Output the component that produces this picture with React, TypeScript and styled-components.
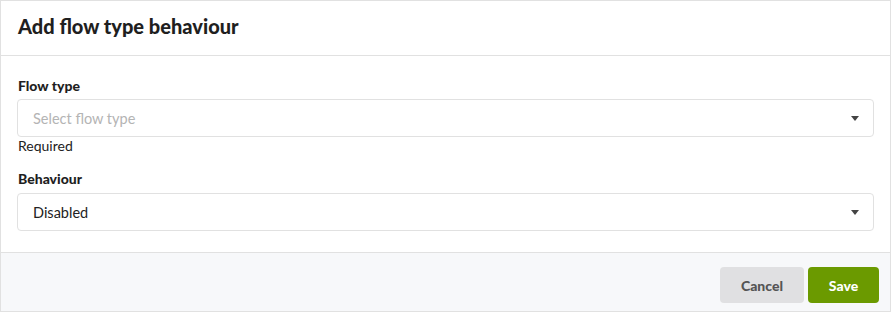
import styled, { createGlobalStyle } from 'styled-components';

const GlobalStyle = createGlobalStyle`
  html, body {
    margin: 0;
    padding: 0;
    background: #ffffff;
    font-family: Lato, 'Open Sans', Arial, sans-serif;
  }
`;

const Modal = styled.div`
  box-sizing: border-box;
  width: 891px;
  height: 312px;
  border: 1px solid #e1e1e1;
  display: flex;
  flex-direction: column;
  background: #fff;
  color: #222;
`;

const Header = styled.div`
  height: 54px;
  padding: 0 17px;
  display: flex;
  align-items: center;
  border-bottom: 1px solid #e1e1e1;
`;

const Title = styled.h2`
  margin: 0;
  font-size: 20px;
  font-weight: 900;
  color: #1f1f1f;
  padding-bottom: 4px;
`;

const Body = styled.div`
  flex: 1;
  padding: 21px 16px 0;
  display: flex;
  flex-direction: column;
`;

const Field = styled.div<{ $gap?: number }>`
  display: flex;
  flex-direction: column;
  margin-bottom: ${(p) => p.$gap ?? 0}px;
`;

const Label = styled.label`
  font-size: 14px;
  font-weight: 900;
  color: #1f1f1f;
  line-height: 18px;
  margin-bottom: 4px;
  padding-left: 1px;
`;

const SelectBox = styled.div<{ $offset?: number }>`
  box-sizing: border-box;
  height: 38px;
  margin-top: ${(p) => p.$offset ?? 0}px;
  border: 1px solid #e1e1e1;
  border-radius: 4px;
  padding: 0 14px 0 15px;
  display: flex;
  align-items: center;
  justify-content: space-between;
`;

const SelectValue = styled.span<{ $placeholder?: boolean }>`
  font-size: 14.5px;
  color: ${(p) => (p.$placeholder ? '#b4b4b4' : '#222')};
`;

const Caret = styled.span`
  width: 0;
  height: 0;
  border-left: 4px solid transparent;
  border-right: 4px solid transparent;
  border-top: 5px solid #444;
`;

const Hint = styled.div`
  font-size: 14px;
  color: #222;
  line-height: 18px;
  padding-left: 1px;
`;

const Footer = styled.div`
  height: 59px;
  box-sizing: border-box;
  border-top: 1px solid #e1e1e1;
  background: #f7f8fa;
  display: flex;
  justify-content: flex-end;
  align-items: flex-start;
  gap: 4px;
  padding: 14px 11px 0;
`;

const Button = styled.button<{ $primary?: boolean }>`
  height: 36px;
  border: none;
  border-radius: 4px;
  font-family: inherit;
  font-size: 14px;
  font-weight: 900;
  cursor: pointer;
  padding: 0;
  width: ${(p) => (p.$primary ? '71px' : '84px')};
  background: ${(p) => (p.$primary ? '#6b9a00' : '#e0e0e2')};
  color: ${(p) => (p.$primary ? '#fff' : '#555')};
`;

export default function App() {
  return (
    <>
      <GlobalStyle />
      <Modal>
        <Header>
          <Title>Add flow type behaviour</Title>
        </Header>
        <Body>
          <Field $gap={15}>
            <Label>Flow type</Label>
            <SelectBox>
              <SelectValue $placeholder>Select flow type</SelectValue>
              <Caret />
            </SelectBox>
            <Hint>Required</Hint>
          </Field>
          <Field>
            <Label>Behaviour</Label>
            <SelectBox $offset={1}>
              <SelectValue>Disabled</SelectValue>
              <Caret />
            </SelectBox>
          </Field>
        </Body>
        <Footer>
          <Button>Cancel</Button>
          <Button $primary>Save</Button>
        </Footer>
      </Modal>
    </>
  );
}
